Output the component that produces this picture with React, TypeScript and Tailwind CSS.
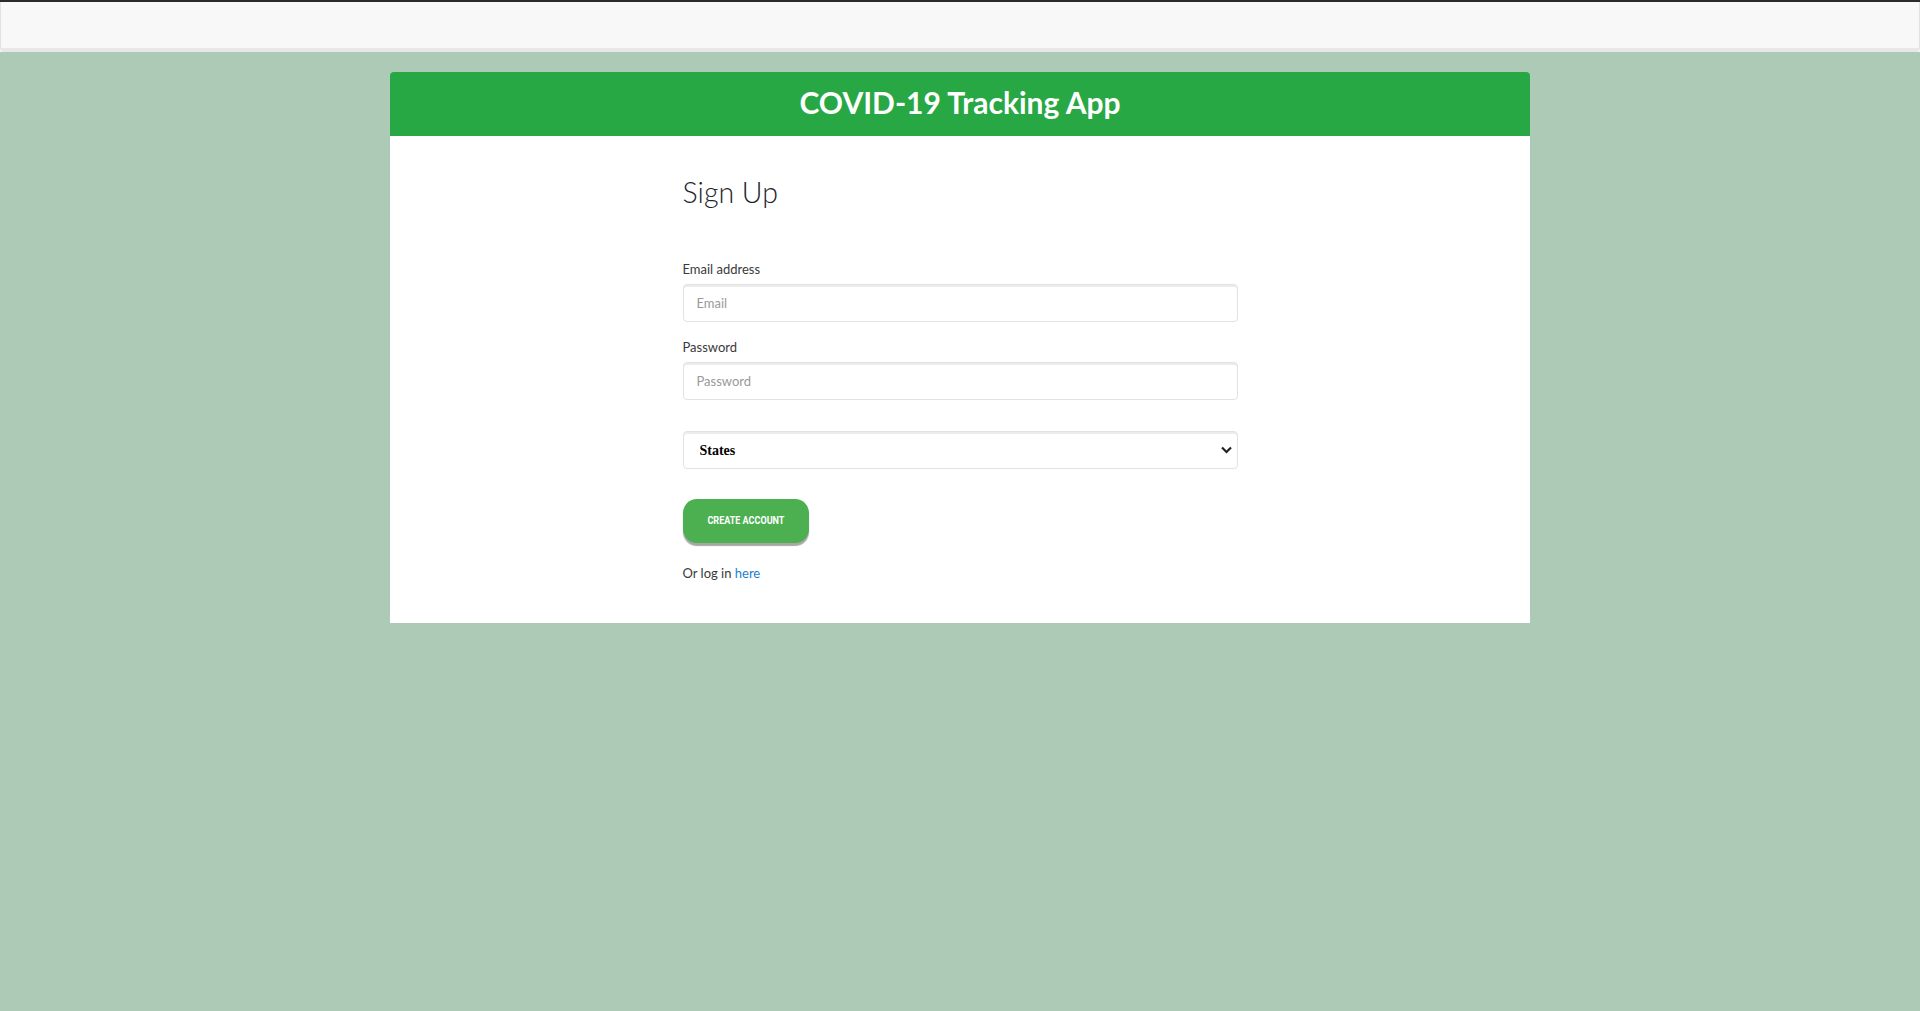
import React from "react";

const sans = { fontFamily: "Lato, 'Open Sans', sans-serif" };

function Field({ label, placeholder, type }: { label: string; placeholder: string; type: string }) {
  return (
    <div className="flex flex-col">
      <label className="mb-[5px] text-[13px] leading-[20px] text-[#3a3a3a]">{label}</label>
      <input
        type={type}
        placeholder={placeholder}
        className="h-[38px] w-full rounded-[4px] border border-[#e2e2e2] bg-white px-[13px] text-[13px] text-[#333] shadow-[inset_0_2px_0_#ececec] outline-none placeholder:text-[#999]"
      />
    </div>
  );
}

export default function App() {
  return (
    <div className="min-h-screen bg-[#adcab7]" style={sans}>
      {/* top navbar */}
      <nav className="h-[52px] border-t-2 border-t-[#2b2b2b] bg-[#f8f8f8]">
        <div className="h-full rounded-b-[4px] border-x border-b-4 border-x-[#e2e2e2] border-b-[#e7e7e7]" />
      </nav>

      {/* card */}
      <div className="mx-auto mt-[20px] w-[1140px]">
        <div className="flex h-[64px] items-center justify-center rounded-t-[4px] bg-[#28a745] pb-[5px]">
          <h1 className="text-[30px] font-bold leading-none text-white">COVID-19 Tracking App</h1>
        </div>

        <div className="bg-white pb-[40px] pt-[39px]">
          <div className="mx-auto w-[555px]">
            <h2 className="text-[28.5px] font-light leading-[34px] text-[#212529]">Sign Up</h2>

            <div className="mt-[50px] flex flex-col gap-[15px]">
              <Field label="Email address" placeholder="Email" type="email" />
              <Field label="Password" placeholder="Password" type="password" />
            </div>

            <div className="relative mt-[31px]">
              <select
                defaultValue="States"
                className="h-[38px] w-full appearance-none rounded-[4px] border border-[#e2e2e2] bg-white pl-[16px] text-[14px] font-bold text-black shadow-[inset_0_2px_0_#ececec] outline-none"
                style={{ fontFamily: "'Liberation Serif', serif" }}
              >
                <option>States</option>
              </select>
              <svg
                className="pointer-events-none absolute right-[6px] top-[15px]"
                width="11"
                height="8"
                viewBox="0 0 11 8"
              >
                <path d="M1 1.5 L5.5 6 L10 1.5" fill="none" stroke="#222" strokeWidth="2.2" />
              </svg>
            </div>

            <button
              type="button"
              className="mt-[30px] flex h-[44px] w-[126px] items-center justify-center rounded-[14px] bg-[#4caf50] shadow-[0_3px_1px_rgba(0,0,0,0.35)]"
            >
              <span
                className="inline-block scale-x-[0.82] whitespace-nowrap text-[11px] font-bold text-white"
                style={{ fontFamily: "Roboto, sans-serif" }}
              >
                CREATE ACCOUNT
              </span>
            </button>

            <p className="mt-[20px] text-[13px] leading-[20px] text-[#3a3a3a]">
              Or log in <a href="#" className="text-[#1e7fcf]">here</a>
            </p>
          </div>
        </div>
      </div>
    </div>
  );
}
